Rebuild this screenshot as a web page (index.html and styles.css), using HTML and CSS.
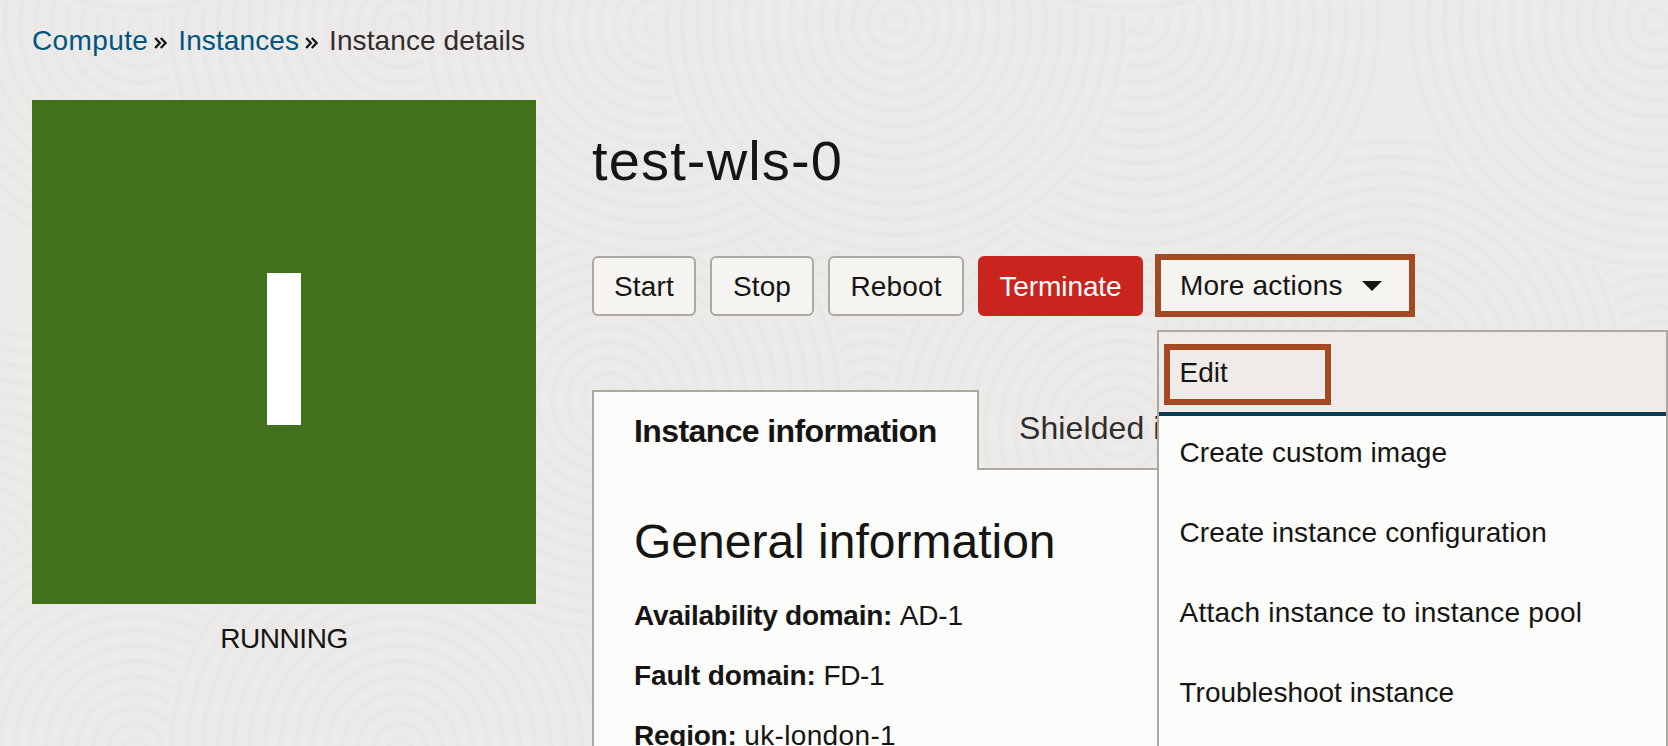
FILE: index.html
```html
<!DOCTYPE html>
<html lang="en">
<head>
<meta charset="utf-8">
<title>Instance details</title>
<link rel="stylesheet" href="styles.css">
</head>
<body>
<svg class="texture" width="1668" height="746" viewBox="0 0 1668 746" aria-hidden="true">
  <defs>
    <radialGradient id="rings" cx=".5" cy=".5" r=".033" spreadMethod="repeat">
      <stop offset="0" stop-color="#edebe9"/>
      <stop offset=".4" stop-color="#edebe9"/>
      <stop offset=".75" stop-color="#e9e7e5"/>
      <stop offset="1" stop-color="#edebe9"/>
    </radialGradient>
  </defs>
  <g fill="url(#rings)">
    <circle cx="-20" cy="560" r="235"/>
    <circle cx="660" cy="600" r="235"/>
    <circle cx="135" cy="750" r="235"/>
    <circle cx="400" cy="750" r="235"/>
    <circle cx="1660" cy="380" r="235"/>
    <circle cx="870" cy="400" r="235"/>
    <circle cx="610" cy="400" r="235"/>
    <circle cx="1120" cy="430" r="235"/>
    <circle cx="1390" cy="370" r="235"/>
    <circle cx="140" cy="25" r="235"/>
    <circle cx="400" cy="25" r="235"/>
    <circle cx="657" cy="25" r="235"/>
    <circle cx="1655" cy="22" r="250"/>
    <circle cx="1140" cy="22" r="245"/>
    <circle cx="895" cy="22" r="235"/>
    <circle cx="1130" cy="-220" r="235"/>
    <circle cx="140" cy="-210" r="225"/>
  </g>
</svg>
<div class="page">
  <nav class="crumbs">
    <a class="crumb-link c1">Compute</a><svg class="sep" width="14" height="14" viewBox="0 0 14 14"><path d="M1.2 2 5.8 7 1.2 12M6.8 2 11.6 7 6.8 12"/></svg>
    <a class="crumb-link c2">Instances</a><svg class="sep" width="14" height="14" viewBox="0 0 14 14"><path d="M1.2 2 5.8 7 1.2 12M6.8 2 11.6 7 6.8 12"/></svg>
    <span class="crumb-here">Instance details</span>
  </nav>
  <div class="columns">
    <aside class="status">
      <div class="tile"><div class="letter"></div></div>
      <div class="state">RUNNING</div>
    </aside>
    <main class="main">
      <h1 class="title">test-wls-0</h1>
      <div class="actions">
        <button class="btn b1">Start</button>
        <button class="btn b2">Stop</button>
        <button class="btn b3">Reboot</button>
        <button class="btn danger">Terminate</button>
        <div class="more">
          <button class="more-btn"><span>More actions</span><svg width="20" height="10" viewBox="0 0 20 10"><path d="M0 0H20L10 10Z" fill="#161513"/></svg></button>
          <ul class="menu">
            <li class="item active"><span>Edit</span><i class="mark"></i></li>
            <li class="item"><span class="m1">Create custom image</span></li>
            <li class="item"><span class="m2">Create instance configuration</span></li>
            <li class="item"><span class="m3">Attach instance to instance pool</span></li>
            <li class="item"><span class="m4">Troubleshoot instance</span></li>
          </ul>
        </div>
      </div>
      <div class="tabs">
        <div class="tab current">Instance information</div>
        <div class="tab clipped">Shielded instance</div>
      </div>
      <section class="panel">
        <h2 class="heading">General information</h2>
        <p class="row"><b class="k1">Availability domain:</b> <span class="v1">AD-1</span></p>
        <p class="row"><b class="k2">Fault domain:</b> <span class="v2">FD-1</span></p>
        <p class="row"><b class="k3">Region:</b> <span class="v3">uk-london-1</span></p>
      </section>
    </main>
  </div>
</div>
</body>
</html>
```

FILE: styles.css
```css
* { box-sizing: border-box; }
body {
  margin: 0;
  height: 746px;
  overflow: hidden;
  background: #edebe9;
  color: #161513;
  font: 28px/32px "Liberation Sans", Arial, sans-serif;
}
.texture { position: absolute; left: 0; top: 0; z-index: -1; }
.page { padding: 0 0 0 32px; height: 746px; overflow: hidden; }
.crumbs { display: flex; align-items: center; height: 100px; padding-bottom: 19px; }
.crumb-link { color: #00557f; }
.c1 { letter-spacing: .38px; }
.c2 { letter-spacing: .1px; }
.crumb-here { color: #312d2a; letter-spacing: .1px; }
.sep { fill: none; stroke: #161513; stroke-width: 2.3; margin: 4px 10px 0 6px; }
.columns { display: flex; gap: 56px; }
.status { width: 504px; flex: none; }
.tile { height: 504px; background: #41711a; display: flex; align-items: center; justify-content: center; }
.letter { width: 34px; height: 152px; margin-top: -6px; background: #fff; }
.state { text-align: center; margin-top: 19px; letter-spacing: -.45px; }
.main { flex: 1; min-width: 0; }
.title { margin: 0; padding-top: 29px; height: 156px; font-weight: 400; font-size: 56px; line-height: 64px; letter-spacing: 1.15px; }
.actions { display: flex; gap: 14px; height: 60px; }
.btn, .more-btn { font: inherit; color: inherit; background: #f5f4f1; white-space: nowrap; padding: 1px 0 0; }
.btn { height: 60px; border: 2px solid #aea8a2; border-radius: 6px; letter-spacing: .15px; }
.b1, .b2 { width: 104px; }
.b3 { width: 136px; }
.danger { width: 165px; border-color: #c9251e; background: #c9251e; color: #fff; letter-spacing: -.1px; }
.more { position: relative; margin: -2px 0 0 -2px; }
.more-btn { display: flex; align-items: center; gap: 19px; width: 260px; height: 63px; border: 6px solid #a34a22; padding: 1px 0 0 19px; letter-spacing: .2px; }
.menu { position: absolute; left: 2px; top: 76px; width: 511px; height: 440px; margin: 0; padding: 0; list-style: none; border: 2px solid #aea8a2; background: #fcfcfa; z-index: 2; }
.item { height: 80px; padding: 24.5px 0 0 20.5px; white-space: nowrap; }
.m1 { letter-spacing: .08px; }
.m2 { letter-spacing: .11px; }
.m3 { letter-spacing: .23px; }
.active { position: relative; height: 84px; background: #efebe8; border-bottom: 4px solid #0b3a52; margin-bottom: -4px; }
.mark { position: absolute; left: 5px; top: 12px; width: 167px; height: 61px; border: 6px solid #a34a22; }
.tabs { display: flex; height: 80px; margin-top: 74px; border-bottom: 2px solid #aea8a2; font-size: 32px; }
.tab { padding: 22px 0 0 40px; color: #312d2a; white-space: nowrap; }
.current { width: 387px; height: 80px; border: 2px solid #aea8a2; border-bottom: 0; background: #fcfcfa; color: #161513; padding: 23px 0 0 40px; font-weight: 700; letter-spacing: -.6px; }
.clipped { width: 180px; overflow: hidden; letter-spacing: .1px; }
.panel { height: 280px; border-left: 2px solid #aea8a2; background: #fcfcfa; padding: 44px 0 0 40px; }
.heading { margin: 0 0 30px; font-weight: 400; font-size: 48px; line-height: 56px; }
.row { margin: 0 0 28px; }
.k1 { letter-spacing: -.27px; }
.k2 { letter-spacing: -.14px; }
.k3 { letter-spacing: -.25px; }
.v1 { letter-spacing: -.2px; }
.v2 { letter-spacing: -.4px; }
.v3 { letter-spacing: .35px; }
```
